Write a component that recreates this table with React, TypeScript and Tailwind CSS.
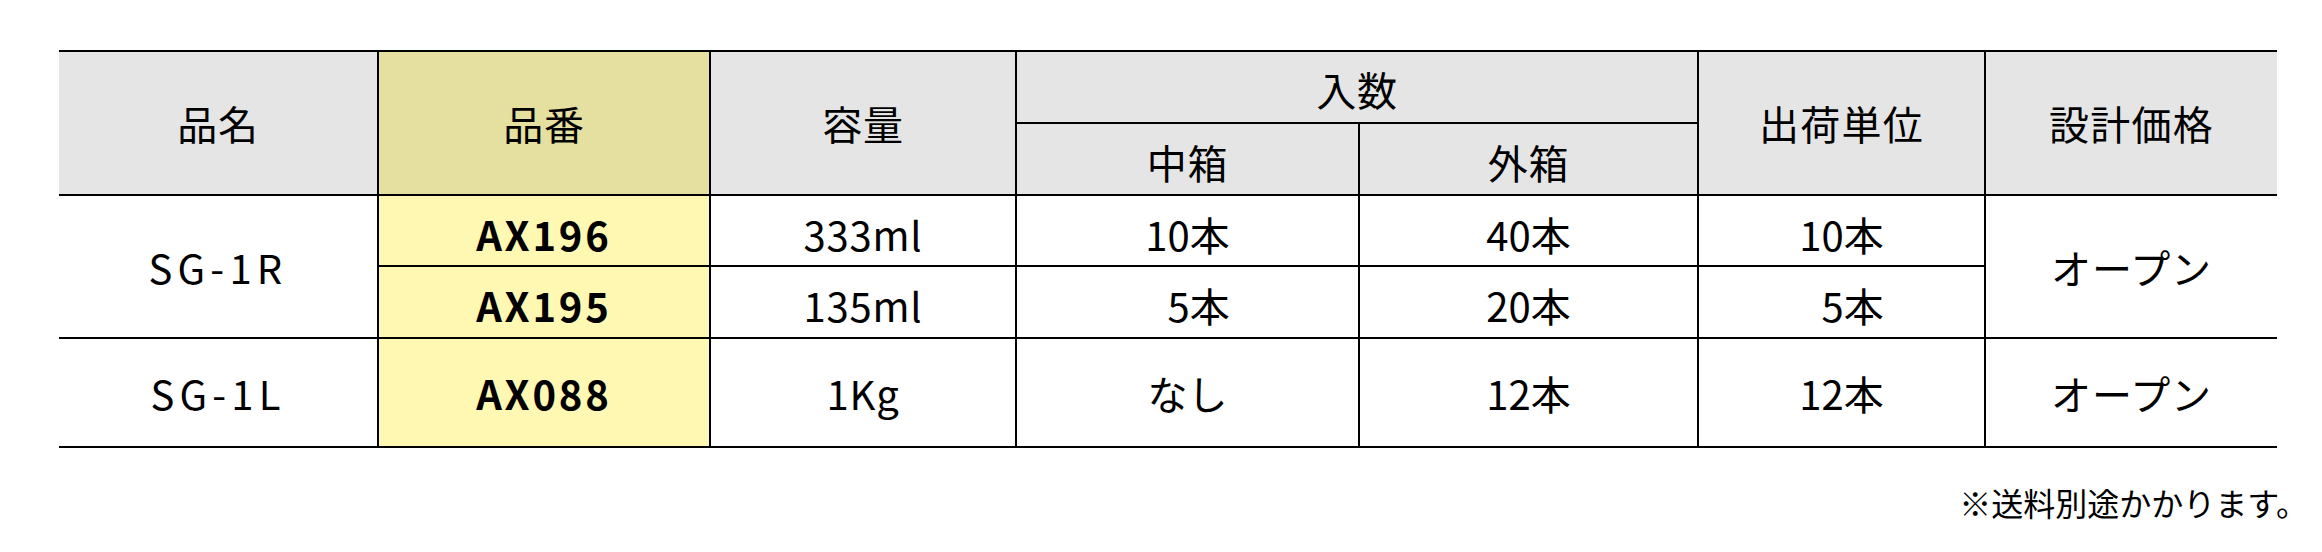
import React from "react";

const cellBase = "border-2 border-black text-center align-middle p-0";
const head = `${cellBase} bg-[#e5e5e5] font-normal`;

function Pad() {
  return <span className="invisible">0</span>;
}

export default function App() {
  return (
    <div
      className="w-[2322px] h-[552px] bg-white text-black"
      style={{ fontFamily: '"Noto Sans CJK JP", "Noto Sans", sans-serif' }}
    >
      <div className="pt-[50px] pl-[59px]">
        <table className="table-fixed border-collapse w-[2218px] text-[40px] leading-none">
          <colgroup>
            <col className="w-[319px]" />
            <col className="w-[332px]" />
            <col className="w-[306px]" />
            <col className="w-[343px]" />
            <col className="w-[339px]" />
            <col className="w-[287px]" />
            <col className="w-[292px]" />
          </colgroup>
          <thead>
            <tr className="h-[72px]">
              <th rowSpan={2} className={`${head} border-l-0 tracking-[0.02em]`}>品名</th>
              <th rowSpan={2} className={`${cellBase} bg-[#e5e0a0] font-normal tracking-[0.02em]`}>品番</th>
              <th rowSpan={2} className={`${head} tracking-[0.02em]`}>容量</th>
              <th colSpan={2} className={`${head} tracking-[0.02em] pt-[4px]`}>入数</th>
              <th rowSpan={2} className={`${head} tracking-[0.03em]`}>出荷単位</th>
              <th rowSpan={2} className={`${head} border-r-0 tracking-[0.03em]`}>設計価格</th>
            </tr>
            <tr className="h-[72px]">
              <th className={`${head} tracking-[0.02em] pt-[6px]`}>中箱</th>
              <th className={`${head} tracking-[0.02em] pt-[6px]`}>外箱</th>
            </tr>
          </thead>
          <tbody>
            <tr className="h-[71px]">
              <td rowSpan={2} className={`${cellBase} border-l-0 tracking-[0.13em]`}>SG-1R</td>
              <td className={`${cellBase} bg-[#fef8b3] font-bold tracking-[0.07em] pt-[6px]`}>AX196</td>
              <td className={`${cellBase} tracking-[0.02em] pt-[6px]`}>333ml</td>
              <td className={`${cellBase} pt-[6px]`}>10本</td>
              <td className={`${cellBase} pt-[6px]`}>40本</td>
              <td className={`${cellBase} pt-[6px]`}>10本</td>
              <td rowSpan={2} className={`${cellBase} border-r-0 tracking-[0.02em]`}>オープン</td>
            </tr>
            <tr className="h-[72px]">
              <td className={`${cellBase} bg-[#fef8b3] font-bold tracking-[0.07em] pt-[6px]`}>AX195</td>
              <td className={`${cellBase} tracking-[0.02em] pt-[6px]`}>135ml</td>
              <td className={`${cellBase} pt-[6px]`}><Pad />5本</td>
              <td className={`${cellBase} pt-[6px]`}>20本</td>
              <td className={`${cellBase} pt-[6px]`}><Pad />5本</td>
            </tr>
            <tr className="h-[109px]">
              <td className={`${cellBase} border-l-0 tracking-[0.13em]`}>SG-1L</td>
              <td className={`${cellBase} bg-[#fef8b3] font-bold tracking-[0.07em]`}>AX088</td>
              <td className={`${cellBase} tracking-[0.02em]`}>1Kg</td>
              <td className={`${cellBase}`}>なし</td>
              <td className={`${cellBase}`}>12本</td>
              <td className={`${cellBase}`}>12本</td>
              <td className={`${cellBase} border-r-0 tracking-[0.02em]`}>オープン</td>
            </tr>
          </tbody>
        </table>
      </div>
      <div className="flex justify-end pr-[14px] pt-[38px]">
        <p className="text-[32px] leading-none">※送料別途かかります。</p>
      </div>
    </div>
  );
}
